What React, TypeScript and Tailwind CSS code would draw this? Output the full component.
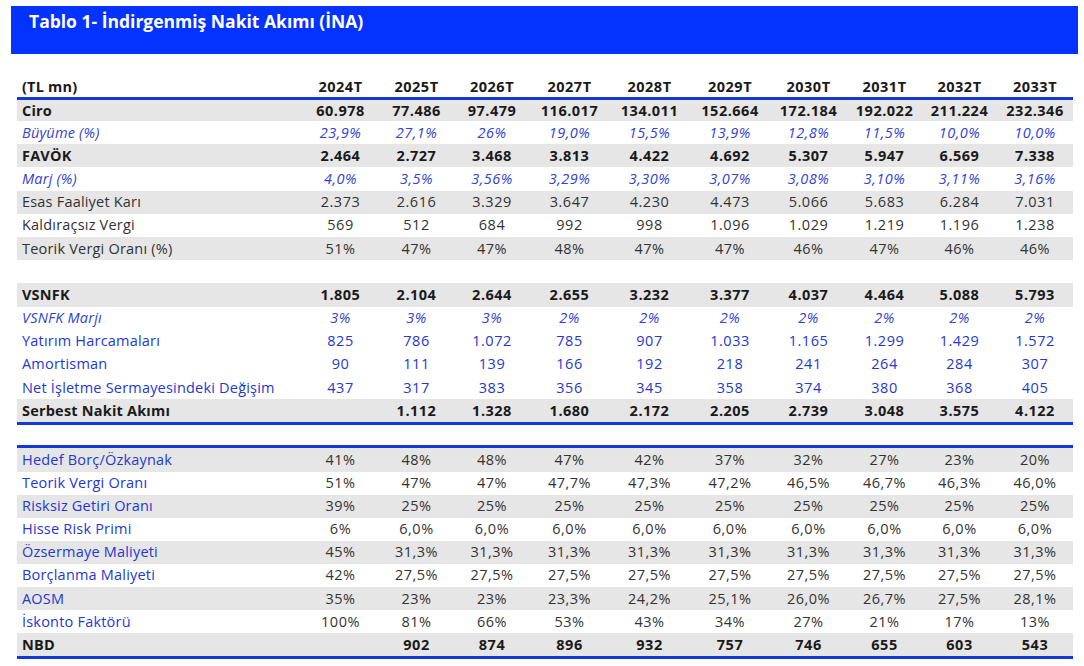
import React from "react";

type Kind = "bold" | "italic" | "normal" | "blue" | "bluelabel" | "blank";
type Row = { label: string; values: string[]; kind: Kind; gray: boolean };

const rep = (first: string, rest: string, n = 9) => [first, ...Array(n).fill(rest)];

const top: Row[] = [
  { label: "Ciro", kind: "bold", gray: true, values: ["60.978", "77.486", "97.479", "116.017", "134.011", "152.664", "172.184", "192.022", "211.224", "232.346"] },
  { label: "Büyüme (%)", kind: "italic", gray: false, values: ["23,9%", "27,1%", "26%", "19,0%", "15,5%", "13,9%", "12,8%", "11,5%", "10,0%", "10,0%"] },
  { label: "FAVÖK", kind: "bold", gray: true, values: ["2.464", "2.727", "3.468", "3.813", "4.422", "4.692", "5.307", "5.947", "6.569", "7.338"] },
  { label: "Marj (%)", kind: "italic", gray: false, values: ["4,0%", "3,5%", "3,56%", "3,29%", "3,30%", "3,07%", "3,08%", "3,10%", "3,11%", "3,16%"] },
  { label: "Esas Faaliyet Karı", kind: "normal", gray: true, values: ["2.373", "2.616", "3.329", "3.647", "4.230", "4.473", "5.066", "5.683", "6.284", "7.031"] },
  { label: "Kaldıraçsız Vergi", kind: "normal", gray: false, values: ["569", "512", "684", "992", "998", "1.096", "1.029", "1.219", "1.196", "1.238"] },
  { label: "Teorik Vergi Oranı (%)", kind: "normal", gray: true, values: ["51%", "47%", "47%", "48%", "47%", "47%", "46%", "47%", "46%", "46%"] },
  { label: "", kind: "blank", gray: false, values: Array(10).fill("") },
  { label: "VSNFK", kind: "bold", gray: true, values: ["1.805", "2.104", "2.644", "2.655", "3.232", "3.377", "4.037", "4.464", "5.088", "5.793"] },
  { label: "VSNFK Marjı", kind: "italic", gray: false, values: ["3%", "3%", "3%", "2%", "2%", "2%", "2%", "2%", "2%", "2%"] },
  { label: "Yatırım Harcamaları", kind: "blue", gray: false, values: ["825", "786", "1.072", "785", "907", "1.033", "1.165", "1.299", "1.429", "1.572"] },
  { label: "Amortisman", kind: "blue", gray: false, values: ["90", "111", "139", "166", "192", "218", "241", "264", "284", "307"] },
  { label: "Net İşletme Sermayesindeki Değişim", kind: "blue", gray: false, values: ["437", "317", "383", "356", "345", "358", "374", "380", "368", "405"] },
  { label: "Serbest Nakit Akımı", kind: "bold", gray: true, values: ["", "1.112", "1.328", "1.680", "2.172", "2.205", "2.739", "3.048", "3.575", "4.122"] },
];

const bottom: Row[] = [
  { label: "Hedef Borç/Özkaynak", kind: "bluelabel", gray: true, values: ["41%", "48%", "48%", "47%", "42%", "37%", "32%", "27%", "23%", "20%"] },
  { label: "Teorik Vergi Oranı", kind: "bluelabel", gray: false, values: ["51%", "47%", "47%", "47,7%", "47,3%", "47,2%", "46,5%", "46,7%", "46,3%", "46,0%"] },
  { label: "Risksiz Getiri Oranı", kind: "bluelabel", gray: true, values: rep("39%", "25%") },
  { label: "Hisse Risk Primi", kind: "bluelabel", gray: false, values: rep("6%", "6,0%") },
  { label: "Özsermaye Maliyeti", kind: "bluelabel", gray: true, values: rep("45%", "31,3%") },
  { label: "Borçlanma Maliyeti", kind: "bluelabel", gray: false, values: rep("42%", "27,5%") },
  { label: "AOSM", kind: "bluelabel", gray: true, values: ["35%", "23%", "23%", "23,3%", "24,2%", "25,1%", "26,0%", "26,7%", "27,5%", "28,1%"] },
  { label: "İskonto Faktörü", kind: "bluelabel", gray: false, values: ["100%", "81%", "66%", "53%", "43%", "34%", "27%", "21%", "17%", "13%"] },
  { label: "NBD", kind: "bold", gray: true, values: ["", "902", "874", "896", "932", "757", "746", "655", "603", "543"] },
];

const years = ["2024T", "2025T", "2026T", "2027T", "2028T", "2029T", "2030T", "2031T", "2032T", "2033T"];

const GRID =
  "grid grid-cols-[285px_77px_75px_76px_79px_81px_80px_77px_75px_75px_76px] items-center";

function labelCls(k: Kind) {
  switch (k) {
    case "bold":
      return "font-bold text-[#1a1a1a]";
    case "italic":
      return "italic text-[#3242d2]";
    case "normal":
      return "text-[#333333]";
    case "blue":
    case "bluelabel":
      return "text-[#2538d2]";
    default:
      return "";
  }
}
function valueCls(k: Kind) {
  switch (k) {
    case "bold":
      return "font-bold text-[#1a1a1a]";
    case "italic":
      return "italic text-[#3242d2]";
    case "normal":
    case "bluelabel":
      return "text-[#333333]";
    case "blue":
      return "text-[#2538d2]";
    default:
      return "";
  }
}

function TRow({ r, h }: { r: Row; h: string }) {
  return (
    <div className={`${GRID} ${h} ${r.gray ? "bg-[#e6e6e6]" : "bg-white"}`}>
      <div className={`pl-[5px] whitespace-nowrap tracking-[0.2px] ${labelCls(r.kind)}`}>{r.label}</div>
      {r.values.map((v, i) => (
        <div key={i} className={`text-center whitespace-nowrap tracking-[0.5px] ${valueCls(r.kind)}`}>
          {v}
        </div>
      ))}
    </div>
  );
}

export default function App() {
  return (
    <div
      className="w-[1084px] h-[666px] bg-white overflow-hidden pt-[6px]"
      style={{ fontFamily: '"Open Sans", "Noto Sans", sans-serif' }}
    >
      <div className="ml-[11px] w-[1067px] h-[48px] bg-[#0433ff] pl-[18px] pt-[3px]">
        <div className="text-white font-bold text-[17.5px] leading-[24px]">
          Tablo 1- İndirgenmiş Nakit Akımı (İNA)
        </div>
      </div>

      <div className="ml-[17px] w-[1056px] mt-[23px] text-[14.5px] leading-[18px]">
        <div className={`${GRID} h-[20px] border-b-[3px] border-[#1238d6] box-content`}>
          <div className="pl-[5px] font-bold text-[#1a1a1a] tracking-[0.2px]">(TL mn)</div>
          {years.map((y) => (
            <div key={y} className="text-center font-bold text-[#1a1a1a] tracking-[0.5px]">
              {y}
            </div>
          ))}
        </div>
        {top.map((r, i) => (
          <TRow key={i} r={r} h={i === 0 ? "h-[21px]" : "h-[23.2px]"} />
        ))}
        <div className="h-[3px] bg-[#1238d6]" />
        <div className="h-[20px]" />
        <div className="h-[3px] bg-[#1238d6]" />
        {bottom.map((r, i) => (
          <TRow key={i} r={r} h="h-[23.1px]" />
        ))}
        <div className="h-[3px] bg-[#1238d6]" />
      </div>
    </div>
  );
}
